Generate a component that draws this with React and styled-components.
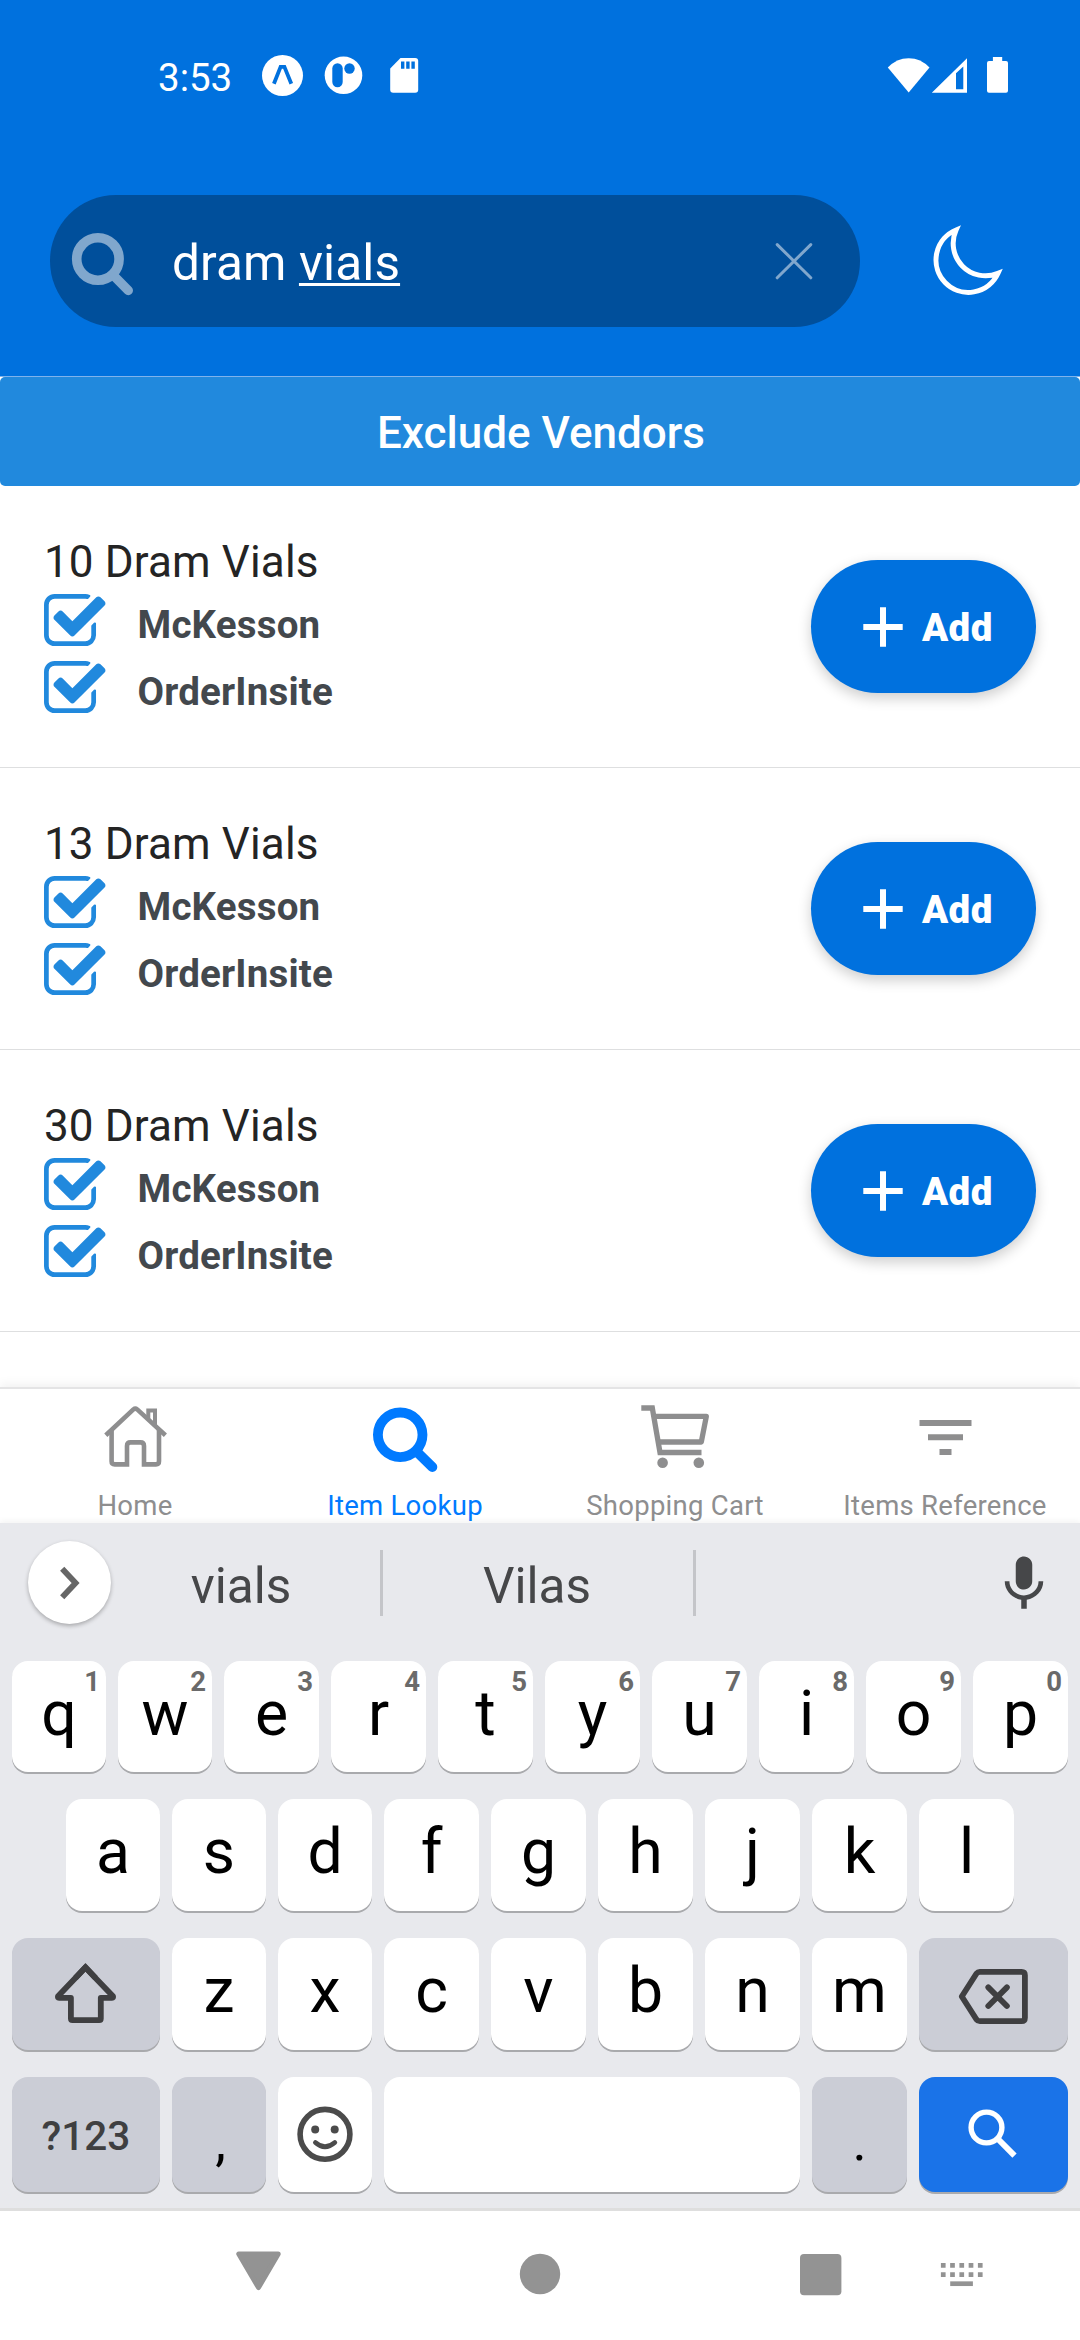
import React from "react";
import styled, { createGlobalStyle } from "styled-components";

const BLUE = "#0071de";
const GREY = "#8e8e8f";

const GlobalStyle = createGlobalStyle`
  html, body { margin: 0; padding: 0; background: #fff; }
  *, *::before, *::after { box-sizing: border-box; }
  body { font-family: Roboto, "Liberation Sans", sans-serif; }
  svg { display: block; flex: none; }
`;

const Screen = styled.div`
  width: 1080px;
  height: 2340px;
  display: flex;
  flex-direction: column;
  overflow: hidden;
  background: #fff;
`;

/* ---------- header ---------- */

const Header = styled.header`
  height: 376px;
  flex: none;
  background: ${BLUE};
  color: #fff;
`;

const StatusBar = styled.div`
  height: 151px;
  display: flex;
  align-items: center;
  justify-content: space-between;
  padding: 0 72px 0 158px;
`;

const StatusGroup = styled.div`
  display: flex;
  align-items: center;
`;

const Clock = styled.span`
  width: 104px;
  padding-top: 4px;
  font-size: 38.5px;
  line-height: 46px;
`;

const SearchRow = styled.div`
  display: flex;
  align-items: center;
  gap: 64px;
  padding: 44px 0 0 50px;
`;

const SearchField = styled.div`
  width: 810px;
  height: 132px;
  display: flex;
  align-items: center;
  padding: 0 42px 0 20px;
  border-radius: 66px;
  background: #004f9b;
`;

const Query = styled.div`
  flex: 1;
  padding: 4px 0 0 32px;
  font-size: 49.5px;
  letter-spacing: 0.12px;
  line-height: 60px;
`;

const Composing = styled.span`
  text-decoration: underline;
  text-decoration-thickness: 3px;
  text-underline-offset: 3px;
  text-decoration-skip-ink: none;
`;

const VendorsBar = styled.div`
  height: 110px;
  flex: none;
  border-top: 1px solid #7fb3ec;
`;

const VendorsButton = styled.button`
  display: block;
  width: 100%;
  height: 109px;
  padding: 3px 0 0 2px;
  border: 0;
  border-radius: 5px;
  background: #2189dd;
  color: #fff;
  font: 500 44px/60px Roboto, sans-serif;
`;

/* ---------- list ---------- */

const List = styled.main`
  height: 901px;
  flex: none;
  overflow: hidden;
`;

const Item = styled.section`
  height: 282px;
  display: flex;
  align-items: center;
  justify-content: space-between;
  padding: 0 44px;
  border-bottom: 1px solid #dedfe0;
`;

const ItemInfo = styled.div`
  align-self: flex-start;
  padding-top: 50px;
`;

const ItemTitle = styled.h2`
  margin: 0 0 6px;
  color: #242424;
  font-size: 44px;
  font-weight: 400;
  letter-spacing: 0.14px;
  line-height: 52px;
`;

const Vendor = styled.div`
  height: 52px;
  display: flex;
  align-items: center;
  gap: 32px;
  margin-bottom: 15px;
`;

const VendorName = styled.span`
  padding-top: 9px;
  color: #43484d;
  font-size: 38.5px;
  font-weight: 700;
  letter-spacing: 0.18px;
  line-height: 46px;
`;

const AddButton = styled.button`
  width: 225px;
  height: 133px;
  display: flex;
  align-items: center;
  padding: 0 0 0 52px;
  border: 0;
  border-radius: 67px;
  background: ${BLUE};
  color: #fff;
  box-shadow: 0 5px 14px rgba(0, 0, 0, 0.2);
`;

const AddLabel = styled.span`
  padding: 3px 0 0 19px;
  font: 900 38.5px/46px Roboto, sans-serif;
  letter-spacing: 0.4px;
`;

/* ---------- tabs ---------- */

const TabBar = styled.nav`
  height: 136px;
  flex: none;
  display: flex;
  border-top: 2px solid #e4e4e5;
  background: #fff;
  box-shadow: 0 -3px 10px rgba(0, 0, 0, 0.06);
`;

const Tab = styled.div`
  flex: 1;
  display: flex;
  flex-direction: column;
  align-items: center;
  padding-top: 11px;
  color: ${(p) => (p.$active ? "#007aff" : GREY)};
`;

const TabLabel = styled.span`
  margin-top: 14px;
  font-size: 27.5px;
  letter-spacing: 0.27px;
  line-height: 32px;
  white-space: nowrap;
`;

/* ---------- keyboard ---------- */

const Keyboard = styled.div`
  height: 685px;
  flex: none;
  background: #e8e9ed;
  box-shadow: 0 -2px 6px rgba(0, 0, 0, 0.05);
`;

const SuggestionBar = styled.div`
  height: 119px;
  display: flex;
  align-items: center;
  padding: 0 23px 0 28px;
`;

const ExpandButton = styled.div`
  width: 83px;
  height: 83px;
  flex: none;
  display: flex;
  align-items: center;
  justify-content: center;
  border-radius: 50%;
  background: #fff;
  box-shadow: 0 2px 4px rgba(0, 0, 0, 0.28);
`;

const Suggestion = styled.div`
  width: ${(p) => p.$width}px;
  padding: 7px ${(p) => p.$shift || 0}px 0 0;
  color: #464749;
  font-size: 49.5px;
  line-height: 58px;
  text-align: center;
`;

const Separator = styled.div`
  width: 3px;
  height: 66px;
  background: #c4c5c9;
`;

const Spacer = styled.div`
  flex: 1;
`;

const Keys = styled.div`
  display: flex;
  flex-direction: column;
  gap: 27px;
  padding-top: 19px;
`;

const KeyRow = styled.div`
  height: ${(p) => p.$height}px;
  display: flex;
  gap: 12px;
  padding: 0 ${(p) => p.$inset || 12}px;
`;

const tones = { light: "#fff", dark: "#cbcdd6", action: "#1a73e8" };

const Key = styled.div`
  position: relative;
  flex: ${(p) => (p.$width ? `0 0 ${p.$width}px` : "1 1 0")};
  min-width: 0;
  display: flex;
  align-items: center;
  justify-content: center;
  padding-bottom: ${(p) => p.$lift || 0}px;
  border-radius: 16px;
  background: ${(p) => tones[p.$tone || "light"]};
  box-shadow: 0 2px 0 #a9aaad;
  color: #000;
  font-size: 62.5px;
  line-height: 72px;
`;

const Hint = styled.span`
  position: absolute;
  top: 5px;
  right: 6px;
  color: #6a6a6a;
  font-size: 27.5px;
  font-weight: 700;
  line-height: 32px;
`;

const ModeLabel = styled.span`
  padding-top: 2px;
  color: #3f3f41;
  font-size: 40.5px;
  font-weight: 500;
  line-height: 48px;
`;

const Punctuation = styled.span`
  padding: 15px 0 0 ${(p) => p.$indent || 0}px;
  font-size: 54px;
  line-height: 64px;
`;

/* ---------- system navigation ---------- */

const SystemNav = styled.div`
  height: 132px;
  flex: none;
  display: flex;
  padding: 29px 0 0 228px;
  border-top: 3px solid #dedede;
  background: #fff;
  color: #939393;
`;

const NavSlot = styled.div`
  margin-right: ${(p) => p.$gap}px;
`;

/* ---------- icons ---------- */

function Icon({ box, children, ...rest }) {
  const [, , w, h] = box.split(" ");
  return (
    <svg viewBox={box} width={w} height={h} fill="none" {...rest}>
      {children}
    </svg>
  );
}

const CheckIcon = () => (
  <svg width="61.5" height="52" viewBox="0 0 1664 1408" fill="#2189dd">
    <path d="M1408 802v318q0 119-84.5 203.5T1120 1408H288q-119 0-203.5-84.5T0 1120V288Q0 169 84.5 84.5T288 0h832q63 0 117 25 15 7 18 23 3 17-9 29l-49 49q-10 10-23 10-3 0-9-2-23-6-45-6H288q-66 0-113 47t-47 113v832q0 66 47 113t113 47h832q66 0 113-47t47-113V866q0-13 9-22l64-64q10-10 23-10 6 0 12 3 20 8 20 29zm231-489l-814 814q-24 24-57 24t-57-24l-430-430q-24-24-24-57t24-57l110-110q24-24 57-24t57 24l263 263 647-647q24-24 57-24t57 24l110 110q24 24 24 57t-24 57z" />
  </svg>
);

const PlusIcon = () => (
  <Icon box="0 0 40 40">
    <path d="M20 0.3V39.7M0.3 20H39.7" stroke="#fff" strokeWidth="6" />
  </Icon>
);

const HomeIcon = () => (
  <Icon box="95 1400 80 76" stroke="currentColor" strokeWidth="4.6" strokeLinejoin="round">
    <path d="M105.8 1435.3L133.4 1409.4Q135.3 1407.8 137.2 1409.4L165.4 1435.3" />
    <path d="M111.6 1430V1461.3Q111.6 1464.4 114.7 1464.4H127V1446Q127 1442.4 130.6 1442.4H140.4Q144 1442.4 144 1446V1464.4H156Q159 1464.4 159 1461.3V1430" strokeLinejoin="miter" />
    <path d="M148.3 1419V1410.4H155V1427" strokeWidth="4" strokeLinejoin="miter" />
  </Icon>
);

const LookupIcon = () => (
  <Icon box="365 1400 80 76" stroke="currentColor">
    <circle cx="400.2" cy="1434.8" r="22.3" strokeWidth="9.8" />
    <path d="M418 1453L432.3 1467" strokeWidth="10" strokeLinecap="round" />
  </Icon>
);

const CartIcon = () => (
  <Icon box="635 1400 80 76" stroke="currentColor" strokeWidth="5.3">
    <path d="M641.3 1408H652.3L660 1452.5H701.5" />
    <path d="M656 1416.4H706.3L701.3 1442H659" strokeLinejoin="round" />
    <circle cx="662.6" cy="1462.7" r="5.3" fill="currentColor" stroke="none" />
    <circle cx="698.8" cy="1462.7" r="5.3" fill="currentColor" stroke="none" />
  </Icon>
);

const FilterIcon = () => (
  <Icon box="905 1400 80 76" stroke="currentColor" strokeWidth="6">
    <path d="M919.5 1423H971.5M928 1437.3H963M939.5 1452H951.5" />
  </Icon>
);

const items = ["10 Dram Vials", "13 Dram Vials", "30 Dram Vials"];
const vendors = ["McKesson", "OrderInsite"];

const tabs = [
  { label: "Home", icon: HomeIcon },
  { label: "Item Lookup", icon: LookupIcon, active: true },
  { label: "Shopping Cart", icon: CartIcon },
  { label: "Items Reference", icon: FilterIcon },
];

/* The leftover pixels of a row go to its last keys: the first `narrow` keys stay 1px slimmer. */
function LetterKeys({ letters, narrow, lift, hints = "" }) {
  return letters.split("").map((ch, i) => (
    <Key key={ch} $lift={lift} $width={i < narrow ? 94 : 95}>
      {ch}
      {hints[i] && <Hint>{hints[i]}</Hint>}
    </Key>
  ));
}

export default function App() {
  return (
    <>
      <GlobalStyle />
      <Screen>
        <Header>
          <StatusBar>
            <StatusGroup>
              <Clock>3:53</Clock>
              <Icon box="262 50 62 51">
                <circle cx="282.5" cy="75.5" r="20.5" fill="#fff" />
                <path d="M273.9 83.8L280.6 66.9H284.4L291.3 83.8" stroke={BLUE} strokeWidth="3.8" />
              </Icon>
              <Icon box="324 50 66 51">
                <circle cx="343.5" cy="75.3" r="18.8" fill="#fff" />
                <rect x="332.3" y="63.3" width="10.4" height="24" rx="5.2" fill={BLUE} />
                <circle cx="349.5" cy="68.5" r="5.2" fill={BLUE} />
              </Icon>
              <Icon box="390 50 30 51">
                <path d="M400.5 58H415.2Q418.2 58 418.2 61V89.7Q418.2 92.7 415.2 92.7H393.2Q390.2 92.7 390.2 89.7V68.4Z" fill="#fff" />
                <path d="M402.7 61.5V68.7M407.9 61.5V68.7M413.1 61.5V68.7" stroke={BLUE} strokeWidth="3.4" />
              </Icon>
            </StatusGroup>
            <StatusGroup>
              <Icon box="886 50 122 51" fill="#fff">
                <path d="M887.8 67.6Q896.5 58.2 908.7 58.2T929.5 67.6L908.7 92.4Z" />
                <path fillRule="evenodd" d="M931.8 92.7L967 58.3V92.7ZM956 73.2V89.3H963.3V66.6Z" />
                <path d="M992.9 57H1002.2V61H1006Q1008 61 1008 63V90.7Q1008 92.7 1006 92.7H989Q987 92.7 987 90.7V63Q987 61 989 61H992.9Z" />
              </Icon>
            </StatusGroup>
          </StatusBar>
          <SearchRow>
            <SearchField>
              <Icon box="70 226 70 70" stroke="#80a7cd">
                <circle cx="97.9" cy="259" r="21.2" strokeWidth="9.6" />
                <path d="M114.5 276.5L128.3 290.5" strokeWidth="9.4" strokeLinecap="round" />
              </Icon>
              <Query>
                dram <Composing>vials</Composing>
              </Query>
              <Icon box="770 237 48 48" stroke="#80a7cd" strokeWidth="3" strokeLinecap="round">
                <path d="M777.2 244.6L810.8 277.8M810.8 244.6L777.2 277.8" />
              </Icon>
            </SearchField>
            <Icon box="924 216 88 90" stroke="#fff" strokeWidth="5">
              <path d="M956.1 230A32.4 32.4 0 1 0 997.9 273.4A32.4 32.4 0 0 1 956.1 230Z" strokeLinejoin="miter" />
            </Icon>
          </SearchRow>
        </Header>

        <VendorsBar>
          <VendorsButton>Exclude Vendors</VendorsButton>
        </VendorsBar>

        <List>
          {items.map((title) => (
            <Item key={title}>
              <ItemInfo>
                <ItemTitle>{title}</ItemTitle>
                {vendors.map((name) => (
                  <Vendor key={name}>
                    <CheckIcon />
                    <VendorName>{name}</VendorName>
                  </Vendor>
                ))}
              </ItemInfo>
              <AddButton>
                <PlusIcon />
                <AddLabel>Add</AddLabel>
              </AddButton>
            </Item>
          ))}
        </List>

        <TabBar>
          {tabs.map(({ label, icon: TabIcon, active }) => (
            <Tab key={label} $active={active}>
              <TabIcon />
              <TabLabel>{label}</TabLabel>
            </Tab>
          ))}
        </TabBar>

        <Keyboard>
          <SuggestionBar>
            <ExpandButton>
              <Icon box="50 1563 40 40" stroke="#666" strokeWidth="5.8">
                <path d="M62.2 1568.8L75.6 1583L62.2 1597.2" />
              </Icon>
            </ExpandButton>
            <Suggestion $width={269} $shift={9}>vials</Suggestion>
            <Separator />
            <Suggestion $width={310} $shift={2}>Vilas</Suggestion>
            <Separator />
            <Spacer />
            <svg width="66" height="66" viewBox="0 -0.4 24 24" fill="#464749">
              <path d="M12 14c1.66 0 2.99-1.34 2.99-3L15 5c0-1.66-1.34-3-3-3S9 3.34 9 5v6c0 1.66 1.34 3 3 3zm5.3-3c0 3-2.54 5.1-5.3 5.1S6.7 14 6.7 11H5c0 3.41 2.72 6.23 6 6.72V21h2v-3.28c3.28-.48 6-3.3 6-6.72h-1.7z" />
            </svg>
          </SuggestionBar>
          <Keys>
            <KeyRow $height={111}>
              <LetterKeys letters="qwertyuiop" hints="1234567890" narrow={2} lift={5} />
            </KeyRow>
            <KeyRow $height={112} $inset={66}>
              <LetterKeys letters="asdfghjkl" narrow={3} lift={7} />
            </KeyRow>
            <KeyRow $height={112}>
              <Key $tone="dark" $width={148}>
                <Icon box="50 1958 72 72" stroke="#3f3f41" strokeWidth="5.8" strokeLinejoin="round">
                  <path d="M85.4 1967.4L58 1996.2Q57.4 1997.8 59 1997.8H70.9V2018.5Q70.9 2020.1 72.5 2020.1H99.2Q100.8 2020.1 100.8 2018.5V1997.8H112Q113.6 1997.8 113 1996.2Z" />
                  <path d="M75.4 1977.9L85.5 1967.3L95.6 1977.9" strokeLinejoin="miter" />
                </Icon>
              </Key>
              <LetterKeys letters="zxcvbnm" narrow={2} lift={7} />
              <Key $tone="dark" $width={149}>
                <Icon box="953.5 1958 80 72" stroke="#3f3f41" strokeWidth="5.8" strokeLinejoin="round">
                  <path d="M961.3 1996.5L976 1973.5Q977.3 1971.9 979.3 1971.9H1021Q1024.4 1971.9 1024.4 1975.3V2017.8Q1024.4 2021.2 1021 2021.2H979.3Q977.3 2021.2 976 2019.5Z" />
                  <path d="M987.8 1987.4L1006.4 2006M1006.4 1987.4L987.8 2006" strokeLinecap="round" />
                </Icon>
              </Key>
            </KeyRow>
            <KeyRow $height={115}>
              <Key $tone="dark" $width={148}>
                <ModeLabel>?123</ModeLabel>
              </Key>
              <Key $tone="dark" $width={94}>
                <Punctuation $indent={3}>,</Punctuation>
              </Key>
              <Key $width={94}>
                <Icon box="289 2098.5 72 72" stroke="#4b4b4b">
                  <circle cx="325" cy="2133.8" r="24.9" strokeWidth="5.6" />
                  <path d="M315.4 2142Q324.9 2150.6 334.8 2142" strokeWidth="4.8" strokeLinecap="round" />
                  <circle cx="315.2" cy="2128.9" r="4" fill="#4b4b4b" stroke="none" />
                  <circle cx="334.7" cy="2128.9" r="4" fill="#4b4b4b" stroke="none" />
                </Icon>
              </Key>
              <Key />
              <Key $tone="dark" $width={95}>
                <Punctuation>.</Punctuation>
              </Key>
              <Key $tone="action" $width={149}>
                <Icon box="957.5 2098.5 72 72" stroke="#fff">
                  <circle cx="986" cy="2127" r="15.4" strokeWidth="5.4" />
                  <path d="M998 2139L1014 2155.2" strokeWidth="6" />
                </Icon>
              </Key>
            </KeyRow>
          </Keys>
        </Keyboard>

        <SystemNav>
          <NavSlot $gap={222}>
            <Icon box="228 2240 60 70" fill="currentColor" stroke="currentColor" strokeWidth="5" strokeLinejoin="round">
              <path d="M238.8 2253.9H278.2L258.5 2287.6Z" />
            </Icon>
          </NavSlot>
          <NavSlot $gap={220}>
            <Icon box="510 2240 60 70" fill="currentColor">
              <circle cx="540" cy="2274" r="20.2" />
            </Icon>
          </NavSlot>
          <NavSlot $gap={81}>
            <Icon box="790 2240 60 70" fill="currentColor">
              <rect x="800" y="2254" width="41.4" height="41.3" rx="4" />
            </Icon>
          </NavSlot>
          <NavSlot $gap={0}>
            <Icon box="931 2240 60 70" stroke="currentColor" strokeWidth="4.7">
              <path d="M940.9 2265.4H982.6M940.9 2274.7H982.6" strokeDasharray="4.7 4.55" />
              <path d="M950.2 2283.7H972.9" />
            </Icon>
          </NavSlot>
        </SystemNav>
      </Screen>
    </>
  );
}
